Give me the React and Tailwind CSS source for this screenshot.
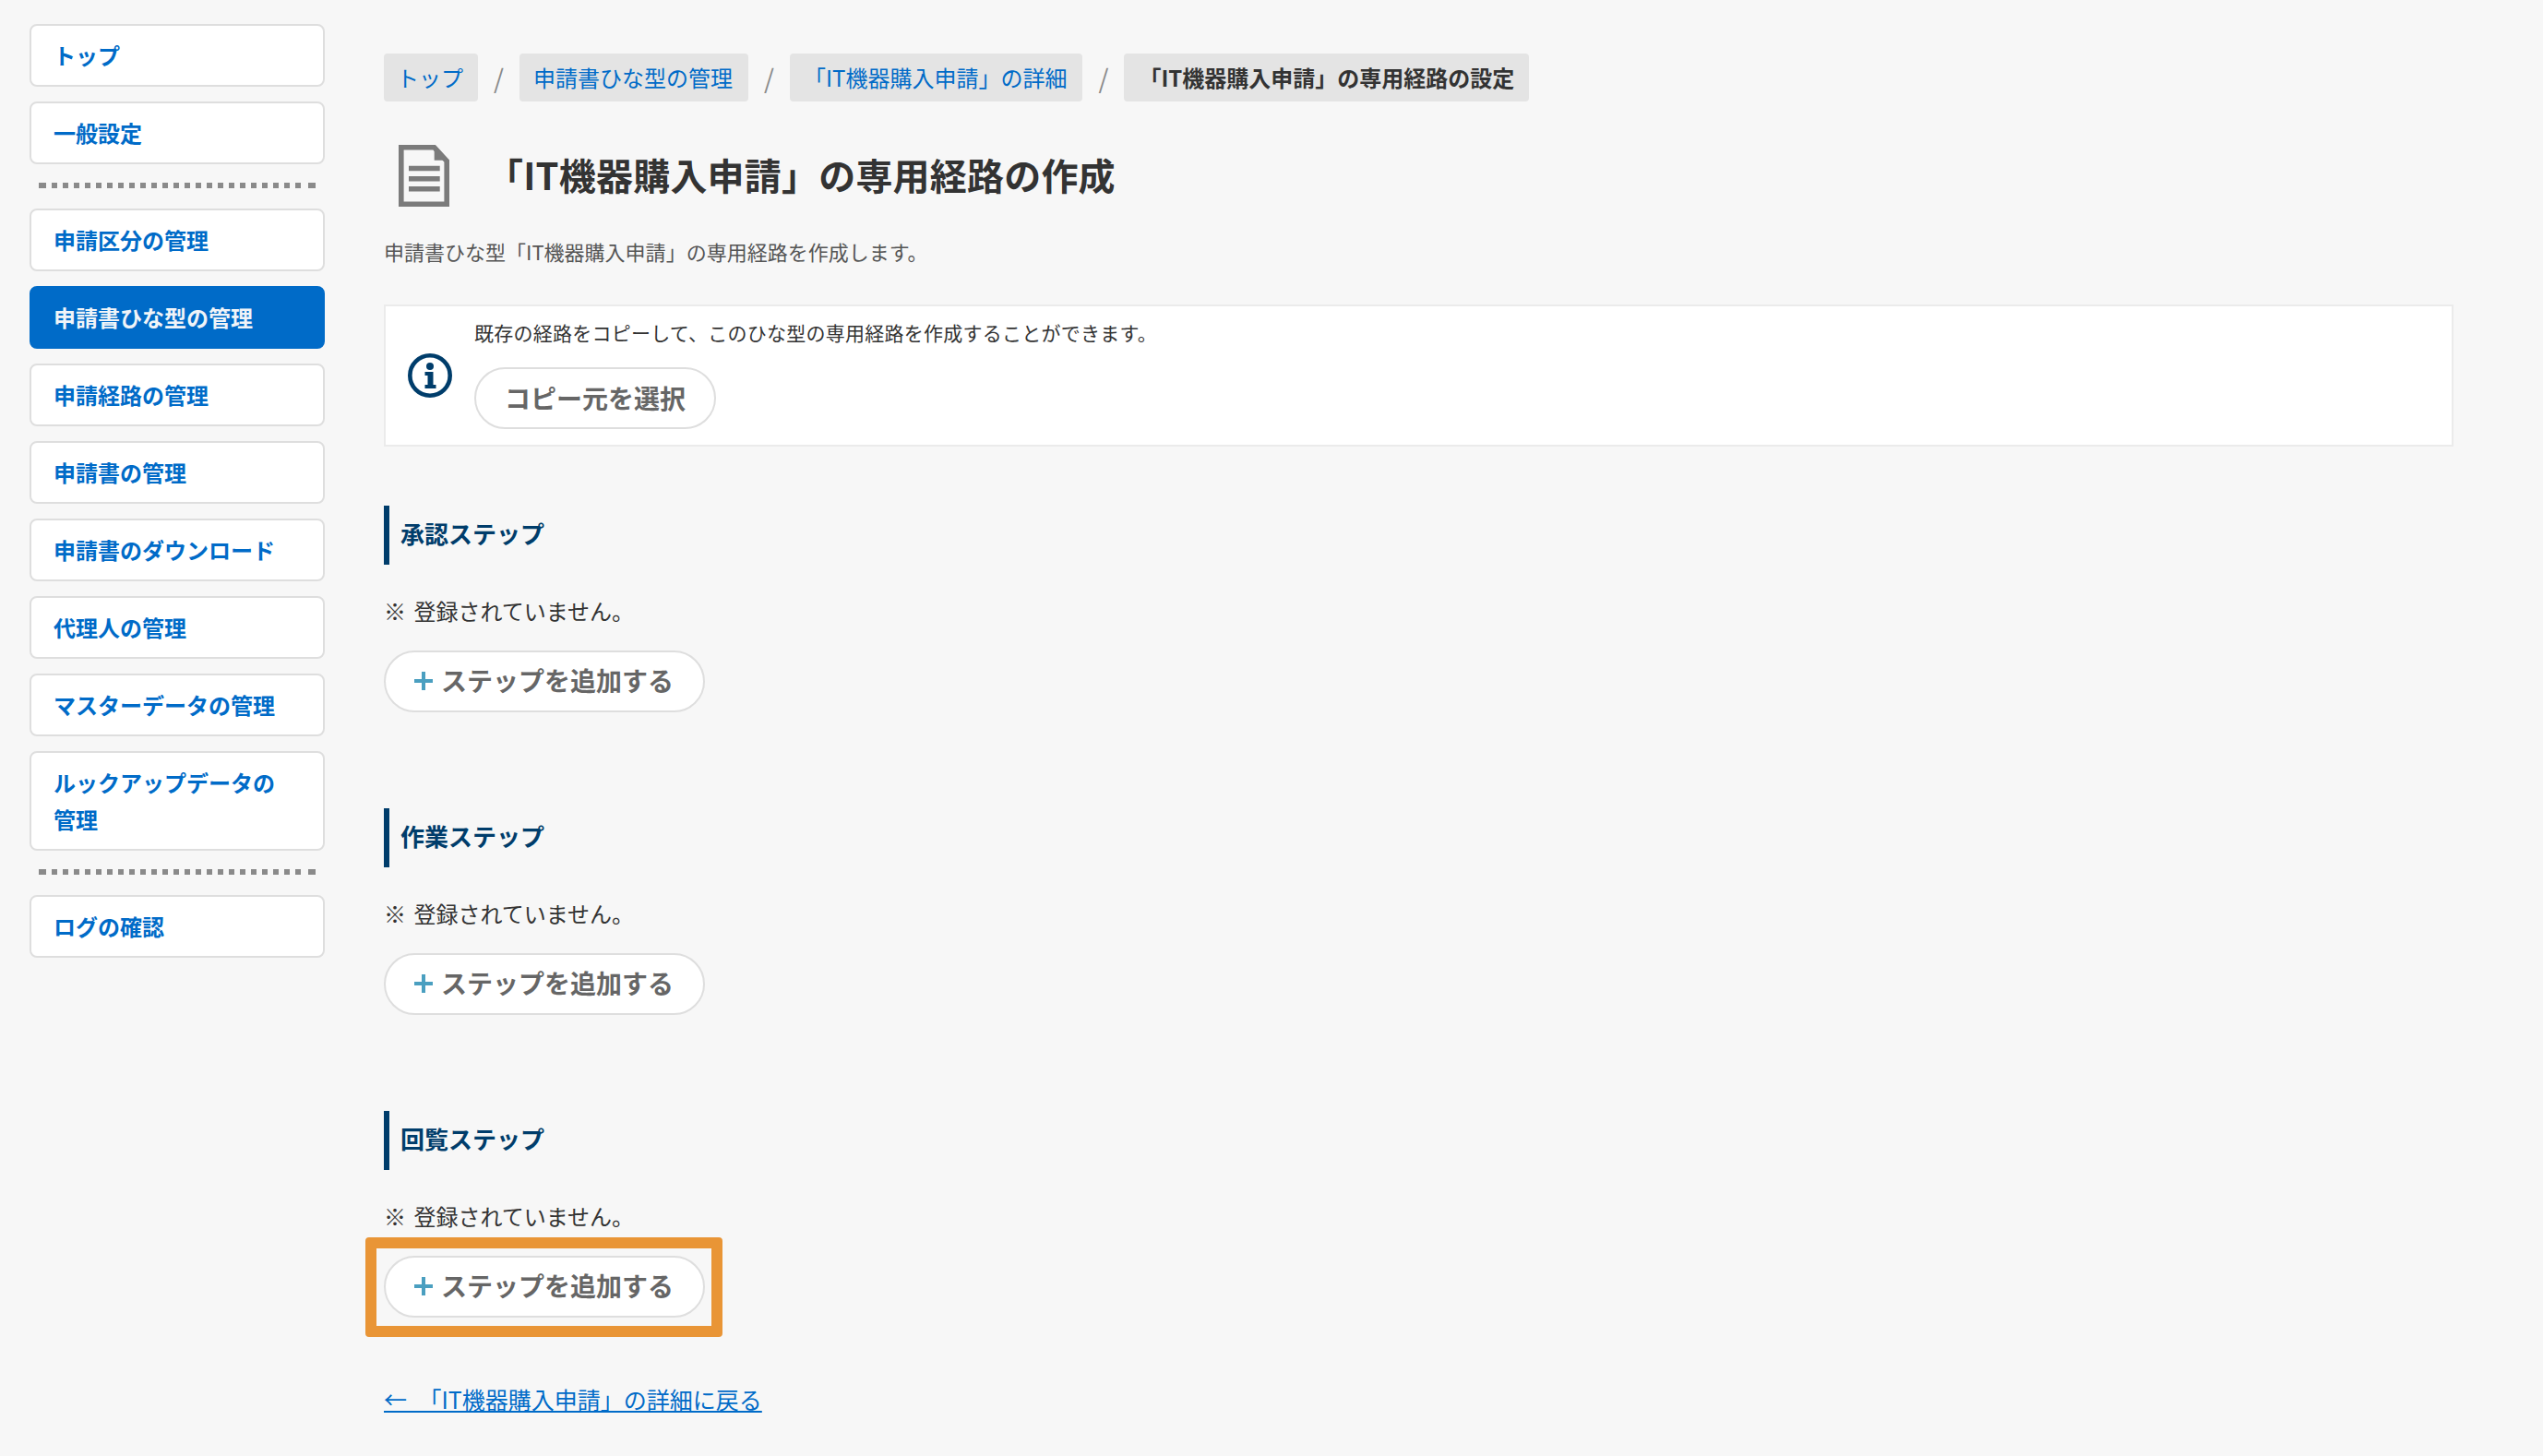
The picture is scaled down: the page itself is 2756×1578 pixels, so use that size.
function Item({ children, active }) {
  return (
    <a className={active
      ? "block rounded-[8px] border-2 border-[#006bc8] bg-[#006bc8] px-[24px] py-[12px] text-[24px] leading-[40px] font-bold text-[#f0f4f8]"
      : "block rounded-[8px] border-2 border-[#dedede] bg-white px-[24px] py-[12px] text-[24px] leading-[40px] font-bold text-[#006bc8]"}>
      {children}
    </a>
  );
}
const dots = Array.from({ length: 25 }, (_, i) => i);
function Dots() {
  return (
    <div className="mx-[10px] mt-[20px] mb-[22px] flex h-[6px] gap-[6px]">
      {dots.map((i) => (
        <span key={i} className={i === 0 ? "h-[6px] w-[8px] bg-[#8a8a8a]" : i === 24 ? "ml-[2px] h-[6px] w-[8px] bg-[#8a8a8a]" : "h-[6px] w-[6px] bg-[#8a8a8a]"} />
      ))}
    </div>
  );
}
function Crumb({ children, current, first }) {
  return (
    <span className={current
      ? "flex h-[52px] items-center rounded-[4px] bg-[#e4e4e4] px-[16px] text-[24px] font-bold text-[#333]"
      : first
        ? "flex h-[52px] items-center rounded-[4px] bg-[#e4e4e4] pl-[14px] pr-[16px] text-[24px] text-[#006bc8]"
        : "flex h-[52px] items-center rounded-[4px] bg-[#e4e4e4] pl-[15px] pr-[17px] text-[24px] text-[#006bc8]"}>
      {children}
    </span>
  );
}
function Sep() {
  return <span className="w-[45px] text-center text-[28px] text-[#8a8a8a]">/</span>;
}
function AddButton() {
  return (
    <button className="flex h-[67px] w-[348px] items-center justify-center rounded-full border-2 border-[#dedede] bg-white pr-[2px] pb-[3px] text-[28px] font-bold text-[#666]">
      <svg width="22" height="22" viewBox="0 0 22 22" className="mt-[2px] mr-[8px]"><path d="M11 1v20M1 11h20" stroke="#4a9fc0" strokeWidth="4" /></svg>
      ステップを追加する
    </button>
  );
}
function Section({ title, highlight }) {
  return (
    <section className="mb-[104px]">
      <h2 className="flex h-[64px] items-center border-l-[6px] border-[#003d6b] pb-[5px] pl-[12px] text-[26px] font-bold text-[#003d6b]">{title}</h2>
      <p className="mt-[31px] h-[38px] text-[24px] leading-[38px] [word-spacing:3px] text-[#333]">※ 登録されていません。</p>
      <div className="relative mt-[24px] w-fit">
        <AddButton />
        {highlight && <div className="absolute -top-[20px] -right-[19px] -bottom-[21px] -left-[20px] rounded-[4px] border-[12px] border-[#e99536]" />}
      </div>
    </section>
  );
}
export default function App() {
  return (
    <div className="flex min-h-[1578px] bg-[#f7f7f7] text-[#333]" style={{ fontFamily: '"Noto Sans CJK JP", sans-serif' }}>
      <nav className="flex w-[416px] shrink-0 flex-col pl-[32px] pr-[64px] pt-[26px]">
        <div className="flex flex-col gap-[16px]">
          <Item>トップ</Item>
          <Item>一般設定</Item>
        </div>
        <Dots />
        <div className="flex flex-col gap-[16px]">
          <Item>申請区分の管理</Item>
          <Item active>申請書ひな型の管理</Item>
          <Item>申請経路の管理</Item>
          <Item>申請書の管理</Item>
          <Item>申請書のダウンロード</Item>
          <Item>代理人の管理</Item>
          <Item>マスターデータの管理</Item>
          <Item>ルックアップデータの<br />管理</Item>
        </div>
        <Dots />
        <Item>ログの確認</Item>
      </nav>
      <main className="w-[2243px] pt-[58px]">
        <div className="flex items-center">
          <Crumb first>トップ</Crumb><Sep />
          <Crumb>申請書ひな型の管理</Crumb><Sep />
          <Crumb>「IT機器購入申請」の詳細</Crumb><Sep />
          <Crumb current>「IT機器購入申請」の専用経路の設定</Crumb>
        </div>
        <div className="mt-[45px] flex h-[70px] items-center">
          <svg width="55" height="67" viewBox="0 0 55 67" className="ml-[16px]">
            <path d="M2.8 2.8H38.7L52.2 17.5V64.2H2.8z" fill="none" stroke="#7b7b7b" strokeWidth="5.6" />
            <path d="M38.7 0L55 16.7H38.7z" fill="#7b7b7b" />
            <path d="M11 22.7h33.7v5.6H11zM11 34h33.7v5.4H11zM11 45h33.7v5.4H11z" fill="#7b7b7b" />
          </svg>
          <h1 className="ml-[40px] pb-[3px] text-[40px] font-bold tracking-[0.2px] text-[#333]">「IT機器購入申請」の専用経路の作成</h1>
        </div>
        <p className="mt-[31px] text-[22px] leading-[32px] text-[#555]">申請書ひな型「IT機器購入申請」の専用経路を作成します。</p>
        <div className="mt-[42px] flex h-[154px] border-2 border-[#ebebeb] bg-white pl-[24px]">
          <svg width="48" height="48" viewBox="0 0 48 48" className="shrink-0 self-center">
            <circle cx="24" cy="24" r="21.7" fill="none" stroke="#003d6b" strokeWidth="4.6" />
            <circle cx="24" cy="14" r="4" fill="#003d6b" />
            <path d="M18.5 20h9v14h3v4h-12v-4h3v-10h-3z" fill="#003d6b" />
          </svg>
          <div className="ml-[24px] flex flex-col pt-[12px]">
            <p className="text-[21px] leading-[32px] tracking-[0.25px] text-[#333]">既存の経路をコピーして、このひな型の専用経路を作成することができます。</p>
            <button className="mt-[22px] h-[67px] w-[262px] rounded-full border-2 border-[#dedede] bg-white pb-[2px] text-[28px] font-bold text-[#666]">コピー元を選択</button>
          </div>
        </div>
        <div className="mt-[64px]">
          <Section title="承認ステップ" />
          <Section title="作業ステップ" />
          <Section title="回覧ステップ" highlight />
        </div>
        <a className="-mt-[34px] block text-[25px] text-[#006bc8] underline">{"←\u3000「IT機器購入申請」の詳細に戻る"}</a>
      </main>
    </div>
  );
}
